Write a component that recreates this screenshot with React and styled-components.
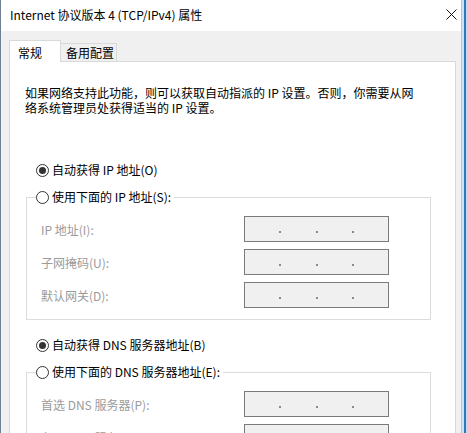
import React from "react";
import styled, { createGlobalStyle } from "styled-components";

const Global = createGlobalStyle`
  html, body { margin: 0; padding: 0; height: 433px; overflow: hidden; }
  body {
    background: #d4e5f4;
    font-family: "Noto Sans CJK SC", "Noto Sans", sans-serif;
    font-size: 12px;
    color: #000;
  }
  * { box-sizing: border-box; }
`;

const Screen = styled.div`
  display: flex;
  height: 433px;
  width: 467px;
`;

const Dialog = styled.div`
  width: 462px;
  height: 433px;
  display: flex;
  flex-direction: column;
  background: #f0f0f0;
  border-left: 1px solid #6f7f92;
  border-right: 1px solid #b9c3cc;
  overflow: hidden;
`;

const Edge = styled.div`
  width: 5px;
  height: 433px;
  background: linear-gradient(to right, #cfe2f3 0 2px, #3474b8 2px 4px, #c4dbef 4px);
`;

const TitleBar = styled.div`
  height: 31px;
  flex: none;
  background: #fff;
  display: flex;
  align-items: center;
  justify-content: space-between;
  padding: 0 0 0 9px;
  line-height: 16px;
`;

const Title = styled.span`
  font-size: 12px;
  padding-bottom: 1px;
`;

const CloseBtn = styled.div`
  width: 20px;
  height: 20px;
  display: flex;
  align-items: center;
  justify-content: center;
  padding-bottom: 2px;
`;

const Body = styled.div`
  flex: 1;
  padding: 9px 5px 0 8px;
  display: flex;
  flex-direction: column;
`;

const TabRow = styled.div`
  display: flex;
  align-items: flex-end;
  height: 22px;
  margin-bottom: -1px;
  position: relative;
  z-index: 1;
`;

const Tab = styled.div`
  height: ${(p) => (p.$active ? "22px" : "19px")};
  width: ${(p) => (p.$active ? "52px" : "56px")};
  padding-left: ${(p) => (p.$active ? "8px" : "5px")};
  padding-top: ${(p) => (p.$active ? "4px" : "1px")};
  background: ${(p) => (p.$active ? "#fff" : "#f0f0f0")};
  border: 1px solid #d9d9d9;
  border-bottom: ${(p) => (p.$active ? "none" : "1px solid #d9d9d9")};
  border-left: ${(p) => (p.$first ? "1px solid #d9d9d9" : "none")};
  line-height: 16px;
  font-size: 12px;
  white-space: nowrap;
`;

const Panel = styled.div`
  flex: 1;
  background: #fff;
  border: 1px solid #d9d9d9;
  border-bottom: none;
  padding: 23px 12px 0 15px;
`;

const Para = styled.p`
  margin: 0;
  line-height: 15px;
  width: 400px;
`;

const RadioRow = styled.label`
  display: flex;
  align-items: center;
  height: 16px;
  line-height: 16px;
  margin-left: 11px;
  margin-top: ${(p) => p.$mt || 0}px;
  gap: 3px;
  white-space: nowrap;
`;

const RadioCircle = styled.span`
  width: 13px;
  height: 13px;
  border-radius: 50%;
  border: 1px solid #333;
  background: #fff;
  display: flex;
  align-items: center;
  justify-content: center;
  flex: none;
  &::after {
    content: "";
    display: ${(p) => (p.$checked ? "block" : "none")};
    width: 7px;
    height: 7px;
    border-radius: 50%;
    background: #333;
  }
`;

const Group = styled.fieldset`
  margin: 11px 12px 0 1px;
  padding: 11px 0 11px 14px;
  border: 1px solid #dcdcdc;
  min-width: 0;
`;

const Legend = styled.legend`
  padding: 0 3px 0 0;
  margin-left: -5px;
  line-height: 16px;
  height: 16px;
  & > ${RadioRow} {
    margin-left: 0;
  }
`;

const Grid = styled.div`
  display: grid;
  grid-template-columns: 203px 145px;
  row-gap: 7px;
  align-items: center;
`;

const FieldLabel = styled.span`
  color: #9b9b9b;
  line-height: 16px;
  padding-top: 1px;
  white-space: nowrap;
`;

const IpBox = styled.div`
  height: 26px;
  border: 1px solid #7a7a7a;
  background: #f0f0f0;
  display: flex;
  align-items: center;
`;

const Seg = styled.span`
  flex: 1;
`;

const Dot = styled.span`
  width: 2px;
  height: 2px;
  background: #8a8a8a;
  margin-top: 5px;
  flex: none;
`;

const Radio = ({ checked, children, mt }) => (
  <RadioRow $mt={mt}>
    <RadioCircle $checked={checked} />
    <span>{children}</span>
  </RadioRow>
);

const IpField = () => (
  <IpBox>
    <Seg />
    <Dot />
    <Seg />
    <Dot />
    <Seg />
    <Dot />
    <Seg />
  </IpBox>
);

const Close = () => (
  <svg width="11" height="11" viewBox="0 0 11 11">
    <path d="M0.5 0.5 L10.5 10.5 M10.5 0.5 L0.5 10.5" stroke="#111" strokeWidth="1" fill="none" />
  </svg>
);

export default function App() {
  return (
    <>
      <Global />
      <Screen>
        <Dialog>
          <TitleBar>
            <Title>Internet 协议版本 4 (TCP/IPv4) 属性</Title>
            <CloseBtn>
              <Close />
            </CloseBtn>
          </TitleBar>
          <Body>
            <TabRow>
              <Tab $active $first>常规</Tab>
              <Tab>备用配置</Tab>
            </TabRow>
            <Panel>
              <Para>
                如果网络支持此功能，则可以获取自动指派的 IP 设置。否则，你需要从网络系统管理员处获得适当的 IP 设置。
              </Para>
              <Radio checked mt={47}>自动获得 IP 地址(O)</Radio>
              <Group>
                <Legend>
                  <Radio>使用下面的 IP 地址(S):</Radio>
                </Legend>
                <Grid>
                  <FieldLabel>IP 地址(I):</FieldLabel>
                  <IpField />
                  <FieldLabel>子网掩码(U):</FieldLabel>
                  <IpField />
                  <FieldLabel>默认网关(D):</FieldLabel>
                  <IpField />
                </Grid>
              </Group>
              <Radio checked mt={17}>自动获得 DNS 服务器地址(B)</Radio>
              <Group>
                <Legend>
                  <Radio>使用下面的 DNS 服务器地址(E):</Radio>
                </Legend>
                <Grid>
                  <FieldLabel>首选 DNS 服务器(P):</FieldLabel>
                  <IpField />
                  <FieldLabel>备用 DNS 服务器(A):</FieldLabel>
                  <IpField />
                </Grid>
              </Group>
            </Panel>
          </Body>
        </Dialog>
        <Edge />
      </Screen>
    </>
  );
}
